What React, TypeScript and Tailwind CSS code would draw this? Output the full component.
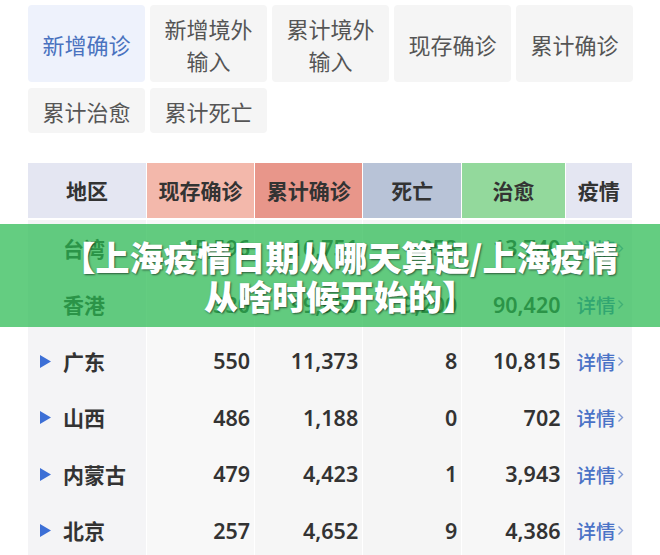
import React from "react";

const cols = [
  { w: "w-[119px]", head: "地区", hbg: "bg-[#e4e6f2]", bbg: "bg-[#f4f4f6]" },
  { w: "w-[108px]", head: "现存确诊", hbg: "bg-[#f3b8ab]", bbg: "bg-[#f8f8f8]" },
  { w: "w-[108px]", head: "累计确诊", hbg: "bg-[#e8968a]", bbg: "bg-[#f6f6f6]" },
  { w: "w-[99px]", head: "死亡", hbg: "bg-[#b8c3d7]", bbg: "bg-[#f5f5f5]" },
  { w: "w-[103px]", head: "治愈", hbg: "bg-[#93d99c]", bbg: "bg-[#f7f7f7]" },
  { w: "w-[67px]", head: "疫情", hbg: "bg-[#e4e6f2]", bbg: "bg-[#f4f4f6]" },
];

const rows = [
  { name: "台湾", arrow: false, v: ["15,596", "16,751", "853", "13,740"] },
  { name: "香港", arrow: false, v: ["330", "99,950", "9,200", "90,420"] },
  { name: "广东", arrow: true, v: ["550", "11,373", "8", "10,815"] },
  { name: "山西", arrow: true, v: ["486", "1,188", "0", "702"] },
  { name: "内蒙古", arrow: true, v: ["479", "4,423", "1", "3,943"] },
  { name: "北京", arrow: true, v: ["257", "4,652", "9", "4,386"] },
];

const cjk = "font-['Noto_Sans_CJK_SC',sans-serif]";
const num = "font-['Noto_Sans','Noto_Sans_CJK_SC',sans-serif]";

function Tab({ children, active, tall }: { children: React.ReactNode; active?: boolean; tall?: boolean }) {
  return (
    <div
      className={`${tall ? "h-[77px]" : "h-[45px]"} rounded-[4px] flex items-center justify-center text-center text-[22px] leading-[32px] ${
        active ? "bg-[#eef2fc] text-[#4a72bf]" : "bg-[#f5f5f5] text-[#555]"
      }`}
    >
      {children}
    </div>
  );
}

export default function App() {
  return (
    <div className={`relative w-[660px] h-[555px] bg-white overflow-hidden ${cjk}`}>
      <div className="pl-[28px] pt-[5px] grid grid-cols-[repeat(5,117px)] gap-x-[5px] gap-y-[6px]">
        <Tab active tall>新增确诊</Tab>
        <Tab tall>
          新增境外
          <br />
          输入
        </Tab>
        <Tab tall>
          累计境外
          <br />
          输入
        </Tab>
        <Tab tall>现存确诊</Tab>
        <Tab tall>累计确诊</Tab>
        <Tab>累计治愈</Tab>
        <Tab>累计死亡</Tab>
      </div>

      <div className="ml-[28px] mt-[30px] w-[604px]">
        <div className="flex h-[55px] gap-px">
          {cols.map((c, i) => (
            <div
              key={i}
              className={`${c.w} ${c.hbg} flex items-center justify-center text-[21px] font-bold text-[#333]`}
            >
              {c.head}
            </div>
          ))}
        </div>
        <div className="h-[2px]" />
        {rows.map((r, ri) => (
          <div key={ri} className="flex h-[56.5px] gap-px">
            <div className={`${cols[0].w} ${cols[0].bbg} flex items-center pl-[12px]`}>
              {r.arrow ? (
                <svg width="11" height="13" viewBox="0 0 11 13" className="mr-[12px]">
                  <polygon points="0,0 11,6.5 0,13" fill="#3c6fd6" />
                </svg>
              ) : (
                <span className="w-[23px]" />
              )}
              <span className="text-[21px] font-bold text-[#333]">{r.name}</span>
            </div>
            {r.v.map((v, vi) => (
              <div
                key={vi}
                className={`${cols[vi + 1].w} ${cols[vi + 1].bbg} flex items-center justify-end pr-[4px] text-[21.5px] font-semibold text-[#333] ${num}`}
              >
                {v}
              </div>
            ))}
            <div className={`${cols[5].w} ${cols[5].bbg} flex items-center pl-[11px] text-[#4a72c6]`}>
              <span className="text-[19.5px] font-medium">详情</span>
              <svg width="7" height="11" viewBox="0 0 7 11" className="ml-[1px]">
                <polyline points="1.5,1.5 5.5,5.5 1.5,9.5" fill="none" stroke="#7d98d4" strokeWidth="1.4" />
              </svg>
            </div>
          </div>
        ))}
      </div>

      <div className="absolute left-0 right-0 top-[224px] h-[103px] bg-[rgba(40,186,80,0.72)] flex flex-col items-center justify-center pl-[20px]">
        <div className="text-white font-black text-[34px] leading-[39px] whitespace-nowrap [text-shadow:1px_1px_2px_rgba(0,0,0,0.55)]">
          【上海疫情日期从哪天算起/上海疫情
        </div>
        <div className="text-white font-black text-[34px] leading-[39px] whitespace-nowrap [text-shadow:1px_1px_2px_rgba(0,0,0,0.55)]">
          从啥时候开始的】
        </div>
      </div>
    </div>
  );
}
